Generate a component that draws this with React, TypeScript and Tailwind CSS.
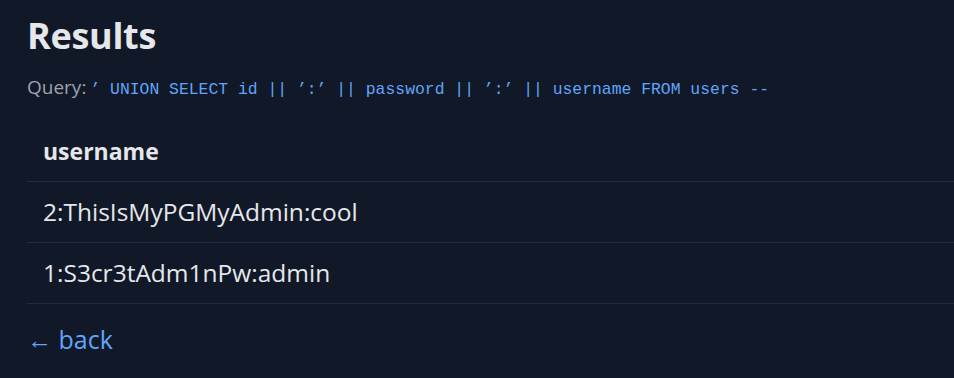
import React from 'react'

const rows = ['2:ThisIsMyPGMyAdmin:cool', '1:S3cr3tAdm1nPw:admin']

function App() {
  return (
    <div className="min-h-[378px] bg-[#111827] pl-[27px] pt-4 text-[#e5e7eb] font-['Open_Sans',sans-serif] overflow-hidden">
      <h1 className="text-4xl leading-10 font-bold tracking-[-0.3px]">Results</h1>
      <p className="mt-[19px] text-[19px] leading-6 text-[#9ca3af]">
        Query:
        <code className="ml-1 font-['Liberation_Mono',monospace] text-[16.4px] text-[#60a5fa]">’ UNION SELECT id || ’:’ || password || ’:’ || username FROM users --</code>
      </p>
      <table className="mt-[19px] w-full border-collapse text-left">
        <thead>
          <tr className="border-b border-[#232c3a]">
            <th className="px-4 py-3 text-[23px] leading-9 font-bold">username</th>
          </tr>
        </thead>
        <tbody>
          {rows.map((r) => (
            <tr key={r} className="border-b border-[#232c3a]">
              <td className="px-4 py-3 text-[24.5px] leading-9">{r}</td>
            </tr>
          ))}
        </tbody>
      </table>
      <a href="#" className="mt-[18px] inline-block text-[25px] leading-[35px] text-[#60a5fa]">← back</a>
    </div>
  )
}

export default App
